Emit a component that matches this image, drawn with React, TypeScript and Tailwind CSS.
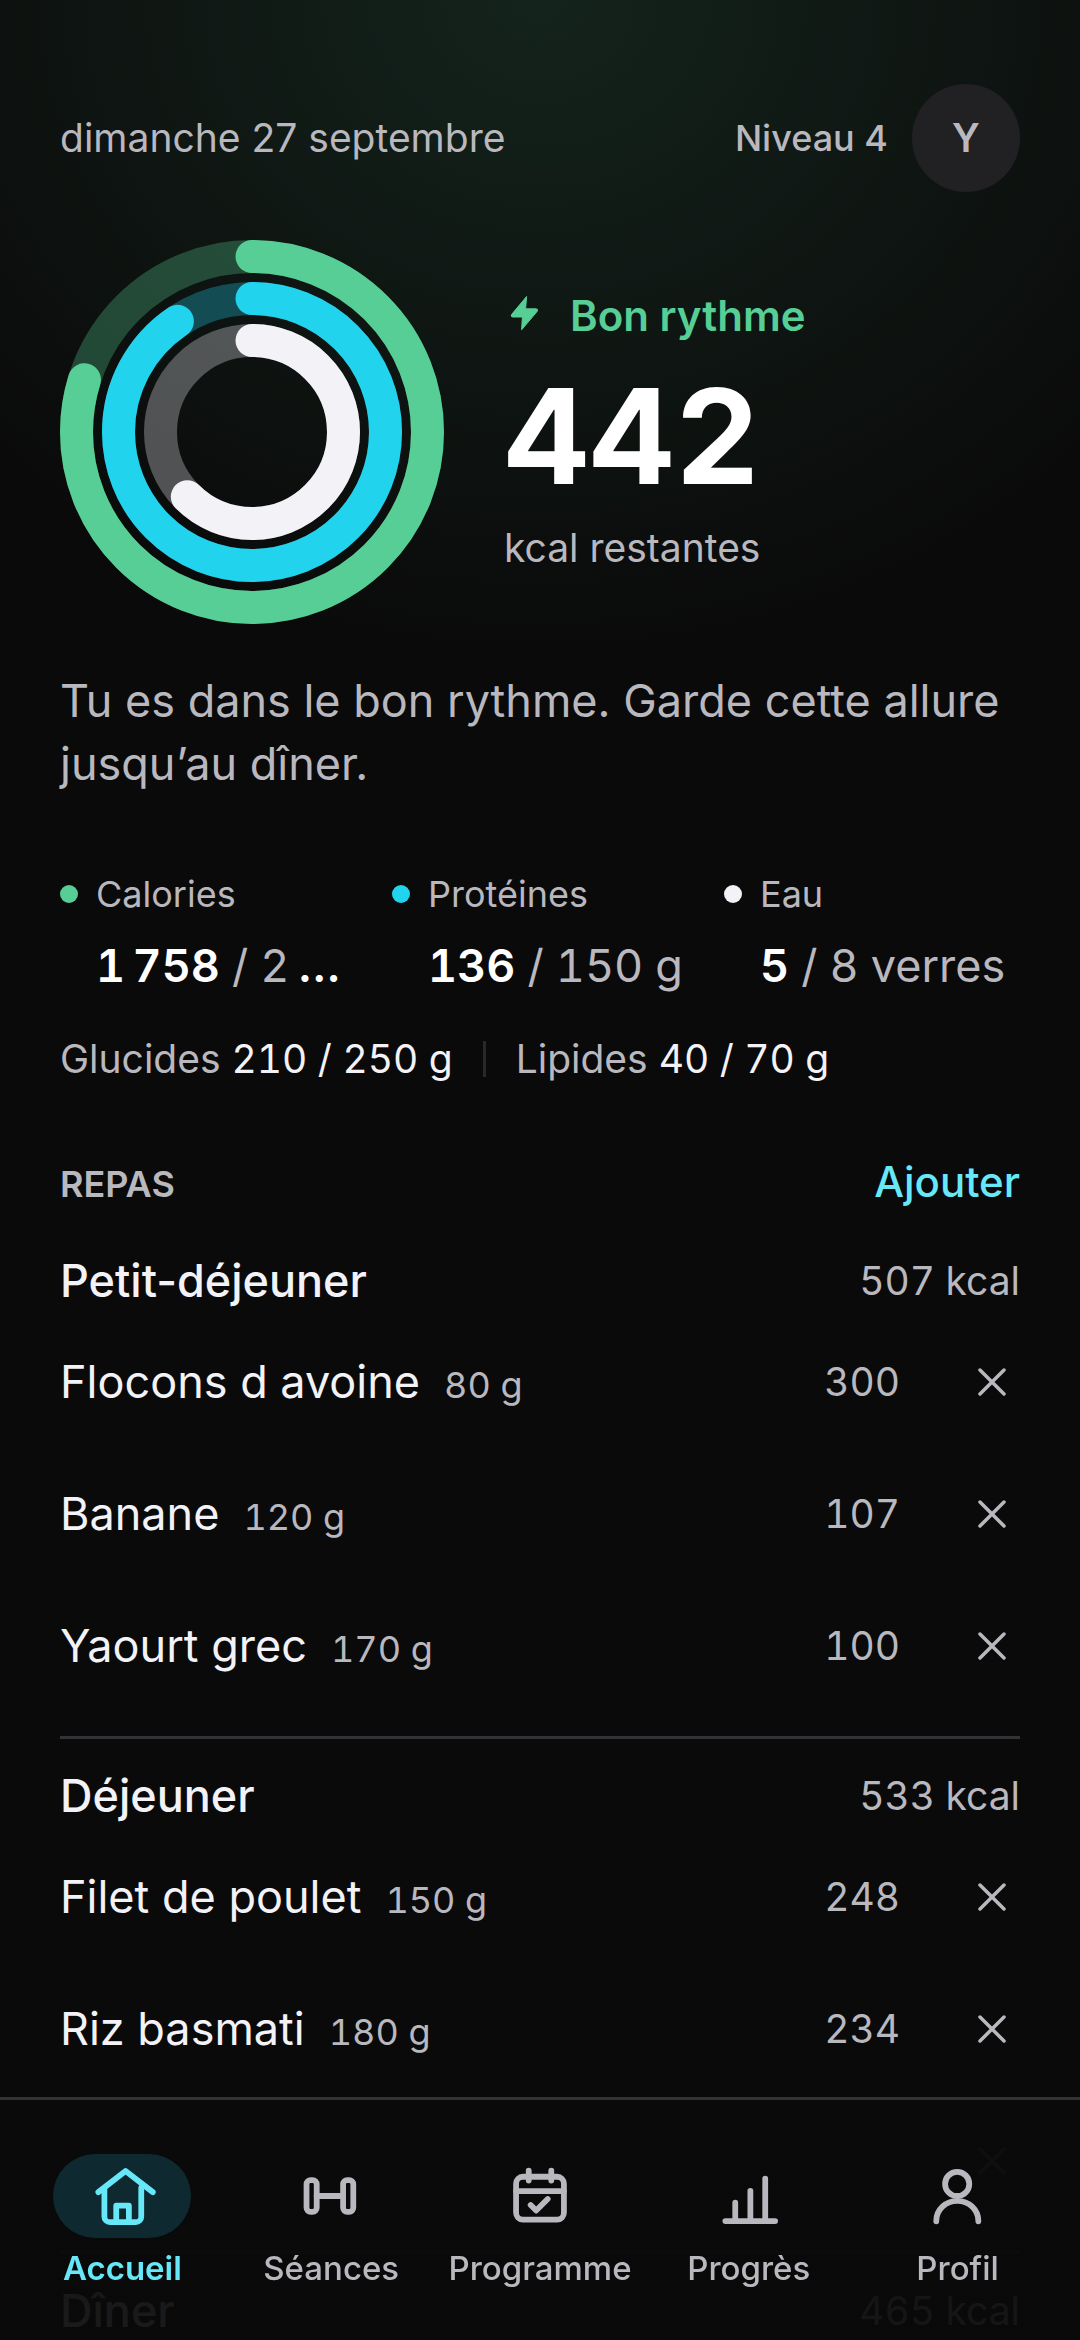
import React from 'react';

interface Ring {
  radius: number;
  value: number;
  color: string;
}

interface Stat {
  label: string;
  value: string;
  goal: string;
  dot: string;
}

interface FoodItem {
  name: string;
  quantity: string;
  kcal: string;
}

interface Meal {
  name: string;
  total: string;
  items: FoodItem[];
}

const rings: Ring[] = [
  { radius: 58.5, value: 1758 / 2200, color: '#57ce95' },
  { radius: 44.5, value: 136 / 150, color: '#22d3ee' },
  { radius: 30.5, value: 5 / 8, color: '#f2f2f7' },
];

const stats: Stat[] = [
  { label: 'Calories', value: '1\u202f758', goal: '2\u202f200', dot: 'bg-[#57ce95]' },
  { label: 'Protéines', value: '136', goal: '150 g', dot: 'bg-[#22d3ee]' },
  { label: 'Eau', value: '5', goal: '8 verres', dot: 'bg-[#f2f2f7]' },
];

const meals: Meal[] = [
  {
    name: 'Petit-déjeuner',
    total: '507 kcal',
    items: [
      { name: 'Flocons d avoine', quantity: '80 g', kcal: '300' },
      { name: 'Banane', quantity: '120 g', kcal: '107' },
      { name: 'Yaourt grec', quantity: '170 g', kcal: '100' },
    ],
  },
  {
    name: 'Déjeuner',
    total: '533 kcal',
    items: [
      { name: 'Filet de poulet', quantity: '150 g', kcal: '248' },
      { name: 'Riz basmati', quantity: '180 g', kcal: '234' },
      { name: '', quantity: '', kcal: '' },
    ],
  },
  { name: 'Dîner', total: '465 kcal', items: [] },
];

const ActivityRings = () => (
  <svg viewBox="0 0 128 128" className="size-96 shrink-0 -rotate-90" fill="none" strokeWidth={11} aria-hidden="true">
    {rings.map(({ radius, value, color }) => (
      <g key={radius} stroke={color}>
        <circle cx={64} cy={64} r={radius} strokeOpacity={0.3} />
        <circle cx={64} cy={64} r={radius} pathLength={1} strokeDasharray={`${value} 1`} strokeLinecap="round" />
      </g>
    ))}
  </svg>
);

const BoltIcon = () => (
  <svg viewBox="0 0 42 42" className="size-[42px]" fill="currentColor" stroke="currentColor" strokeWidth={1} strokeLinejoin="round" aria-hidden="true">
    <path d="M22.6 2.500 7.500 20.600q-.9 2.400 1.200 2.400h9.700L17.600 35.800 33.300 17.200q1-2.400-1.300-2.400H21.600Z" />
  </svg>
);

const CloseIcon = () => (
  <svg viewBox="0 0 28 28" className="size-7" fill="none" stroke="currentColor" strokeWidth={3.5} strokeLinecap="round" aria-hidden="true">
    <path d="M2 2 26 26M26 2 2 26" />
  </svg>
);

const StatCell: React.FC<Stat> = ({ label, value, goal, dot }) => (
  <div className="min-w-0">
    <div className="flex h-12 items-center gap-[18px]">
      <span className={`size-[18px] rounded-full ${dot}`} />
      <span className="text-4xl">{label}</span>
    </div>
    <p className="mt-[18px] ml-9 truncate text-[45px] leading-[60px] font-semibold text-white tabular-nums">
      {value}
      <span className="font-normal text-[#b9b8be]"> / {goal}</span>
    </p>
  </div>
);

const MealHeader: React.FC<{ name: string; total: string }> = ({ name, total }) => (
  <div className="flex h-[66px] items-center justify-between">
    <h3 className="text-[45px] font-medium text-[#f2f2f7]">{name}</h3>
    <span className="text-[39px] tabular-nums">{total}</span>
  </div>
);

const FoodRow: React.FC<FoodItem> = ({ name, quantity, kcal }) => (
  <li className="flex h-[132px] items-center">
    <div className="flex min-w-0 flex-1 items-baseline gap-6">
      <span className="truncate text-[45px] text-[#f2f2f7]">{name}</span>
      <span className="text-4xl whitespace-nowrap tabular-nums">{quantity}</span>
    </div>
    <span className="text-[39px] tabular-nums">{kcal}</span>
    <button type="button" aria-label={`Supprimer ${name}`} className="-mr-[38px] ml-[26px] flex size-[132px] items-center justify-center">
      <CloseIcon />
    </button>
  </li>
);

const navItems = [
  {
    label: 'Accueil',
    icon: (
      <>
        <path d="M3.4 10.6 13.3 2.9l9.9 7.7" />
        <path d="M5.6 9.6v9.9a2 2 0 0 0 2 2H17a2 2 0 0 0 2-2V9" />
        <path d="M9.9 21.3v-5.8h4.6v5.8" />
      </>
    ),
  },
  {
    label: 'Séances',
    icon: (
      <>
        <rect x="3.1" y="6.2" width="3.7" height="11.6" rx="1.5" />
        <rect x="16.4" y="6.2" width="3.7" height="11.6" rx="1.5" />
        <path d="M6.8 12h9.6" />
      </>
    ),
  },
  {
    label: 'Programme',
    icon: (
      <>
        <rect x="3.3" y="5" width="17.4" height="15.6" rx="2.5" />
        <path d="M3.3 10.2h17.4M7.9 2.8v3.6M16.1 2.8v3.6M8.6 15.3l2 2 4.2-4.2" />
      </>
    ),
  },
  {
    label: 'Progrès',
    icon: <path d="M3.4 21.1h18.1M7 21v-6.6M12.5 21V10.1M17.9 21V5.7" />,
  },
  {
    label: 'Profil',
    icon: (
      <>
        <circle cx="11.7" cy="7.6" r="4.4" />
        <path d="M4.1 21.2V21a7.6 7.2 0 0 1 15.3 0v.2" />
      </>
    ),
  },
];

const BottomNav = () => (
  <nav className="fixed inset-x-0 bottom-0 border-t-[3px] border-[#333337] bg-linear-to-b from-[#0a0a0a]/99 to-[#0a0a0a]/93 px-[18px] pt-[54px] pb-[51px]">
    <ul className="flex">
      {navItems.map(({ label, icon }, index) => (
        <li key={label} className="flex-1">
          <a href="#" className={`flex flex-col items-center gap-[9px] ${index === 0 ? 'font-semibold text-[#67e8f9]' : 'font-medium'}`}>
            <span className={`flex h-[84px] w-[138px] items-center justify-center rounded-full ${index === 0 ? 'bg-[#0e292f]' : ''}`}>
              <svg viewBox="0 0 24 24" className="size-[66px] overflow-visible" fill="none" stroke="currentColor" strokeWidth={2.1} strokeLinecap="round" strokeLinejoin="round" aria-hidden="true">
                {icon}
              </svg>
            </span>
            <span className="text-[33px] leading-[42px]">{label}</span>
          </a>
        </li>
      ))}
    </ul>
  </nav>
);

const App = () => (
  <div className="h-screen overflow-hidden bg-[#0a0a0a] bg-[radial-gradient(ellipse_760px_660px_at_50%_0,rgba(87,206,149,0.13),transparent)] font-['Inter',sans-serif] text-[#b9b8be]">
    <main className="px-[60px] pt-[84px]">
      <header className="flex items-center justify-between">
        <p className="text-[39px]">dimanche 27 septembre</p>
        <div className="flex items-center gap-6">
          <span className="text-4xl font-medium">Niveau 4</span>
          <button type="button" className="size-[108px] rounded-full bg-[#212023] text-[39px] font-semibold">Y</button>
        </div>
      </header>

      <section className="mt-12 flex items-center gap-[60px]">
        <ActivityRings />
        <div>
          <p className="flex h-[54px] items-center gap-6 text-[42px] font-semibold text-[#57ce95]">
            <BoltIcon />
            Bon rythme
          </p>
          <p className="mt-7 mb-[18px] text-[132px] leading-[132px] font-bold text-white tabular-nums">442</p>
          <p className="text-[39px] leading-[56px]">kcal restantes</p>
        </div>
      </section>

      <p className="mt-[45px] text-[45px] leading-[63px]">Tu es dans le bon rythme. Garde cette allure jusqu’au dîner.</p>

      <section className="mt-[75px] grid grid-cols-3 gap-9">
        {stats.map((stat) => (
          <StatCell key={stat.label} {...stat} />
        ))}
      </section>

      <div className="mt-9 flex h-[54px] items-center gap-[30px] text-[39px]">
        <p>
          Glucides <span className="text-[#f2f2f7] tabular-nums">210 / 250 g</span>
        </p>
        <span className="h-9 w-[3px] bg-[#29292d]" />
        <p>
          Lipides <span className="text-[#f2f2f7] tabular-nums">40 / 70 g</span>
        </p>
      </div>

      <section className="mt-[60px]">
        <div className="mb-1.5 flex items-baseline justify-between">
          <h2 className="text-4xl font-semibold">REPAS</h2>
          <button type="button" className="text-[42px] leading-[72px] font-medium text-[#67e8f9]">Ajouter</button>
        </div>
        {meals.map((meal) => (
          <div key={meal.name} className="border-b-[3px] border-[#333337] py-6">
            <MealHeader name={meal.name} total={meal.total} />
            <ul className="mt-0.5">
              {meal.items.map((item) => (
                <FoodRow key={item.name} {...item} />
              ))}
            </ul>
          </div>
        ))}
      </section>
    </main>
    <BottomNav />
  </div>
);

export default App;
